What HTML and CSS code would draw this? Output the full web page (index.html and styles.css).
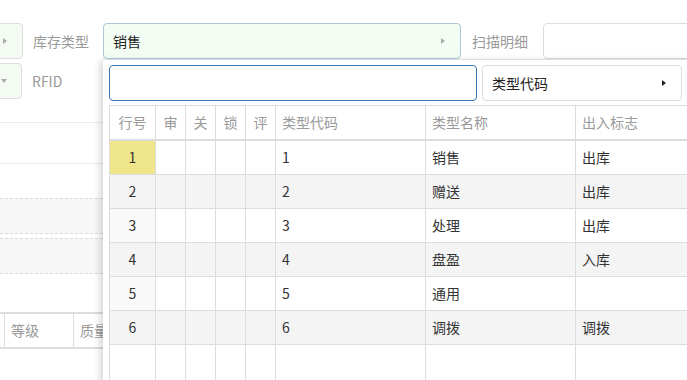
FILE: index.html
```html
<!DOCTYPE html>
<html lang="zh-CN">
<head>
<meta charset="utf-8">
<title>库存类型</title>
<link rel="stylesheet" href="styles.css">
</head>
<body>
<div class="page">
  <div class="form-row">
    <div class="side-box"><span class="tri-right gray"></span></div>
    <div class="lbl lbl-first">库存类型</div>
    <div class="select"><span class="select-text">销售</span><span class="tri-right gray"></span></div>
    <div class="lbl lbl-second">扫描明细</div>
    <div class="text-box"></div>
  </div>
  <div class="form-row row-two">
    <div class="side-box side-box-2"><span class="tri-down"></span></div>
    <div class="lbl lbl-first">RFID</div>
  </div>
  <div class="blank blank-1"></div>
  <div class="blank blank-2"></div>
  <div class="dash-box dash-1"></div>
  <div class="dash-box dash-2"></div>
  <div class="bottom-head">
    <div class="bh-cell bh-a"></div>
    <div class="bh-cell bh-b">等级</div>
    <div class="bh-cell bh-c">质量</div>
  </div>

  <div class="popup">
    <div class="popup-bar">
      <div class="search"></div>
      <div class="field-btn"><span>类型代码</span><span class="tri-right dark"></span></div>
    </div>
    <div class="grid">
      <div class="h c">行号</div>
      <div class="h c">审</div>
      <div class="h c">关</div>
      <div class="h c">锁</div>
      <div class="h c">评</div>
      <div class="h">类型代码</div>
      <div class="h">类型名称</div>
      <div class="h">出入标志</div>

      <div class="d c ln sel">1</div><div class="d"></div><div class="d"></div><div class="d"></div><div class="d"></div><div class="d">1</div><div class="d">销售</div><div class="d">出库</div>
      <div class="d c ln alt">2</div><div class="d alt"></div><div class="d alt"></div><div class="d alt"></div><div class="d alt"></div><div class="d alt">2</div><div class="d alt">赠送</div><div class="d alt">出库</div>
      <div class="d c ln odd">3</div><div class="d"></div><div class="d"></div><div class="d"></div><div class="d"></div><div class="d">3</div><div class="d">处理</div><div class="d">出库</div>
      <div class="d c ln alt">4</div><div class="d alt"></div><div class="d alt"></div><div class="d alt"></div><div class="d alt"></div><div class="d alt">4</div><div class="d alt">盘盈</div><div class="d alt">入库</div>
      <div class="d c ln odd">5</div><div class="d"></div><div class="d"></div><div class="d"></div><div class="d"></div><div class="d">5</div><div class="d">通用</div><div class="d"></div>
      <div class="d c ln alt">6</div><div class="d alt"></div><div class="d alt"></div><div class="d alt"></div><div class="d alt"></div><div class="d alt">6</div><div class="d alt">调拨</div><div class="d alt">调拨</div>
      <div class="d last"></div><div class="d last"></div><div class="d last"></div><div class="d last"></div><div class="d last"></div><div class="d last"></div><div class="d last"></div><div class="d last"></div>
    </div>
  </div>
</div>
</body>
</html>
```

FILE: styles.css
```css
html, body {
  margin: 0;
  padding: 0;
  background: #fff;
  overflow: hidden;
}
body {
  width: 687px;
  height: 380px;
  font-family: "Noto Sans CJK SC", "Noto Sans", sans-serif;
  font-size: 14px;
  color: #333;
}
.page {
  position: relative;
  width: 687px;
  height: 380px;
  padding-top: 23px;
  box-sizing: border-box;
  overflow: hidden;
}
.form-row {
  display: flex;
  align-items: center;
  height: 36px;
}
.form-row > * {
  flex-shrink: 0;
}
.row-two {
  margin-top: 4px;
}
.side-box {
  box-sizing: border-box;
  width: 61px;
  height: 36px;
  margin-left: -38px;
  border: 1px solid #ddd;
  border-radius: 4px;
  background: #f3fbf3;
  display: flex;
  align-items: center;
  justify-content: flex-end;
  padding-right: 15px;
}
.side-box-2 {
  width: 60px;
  padding-right: 14px;
}
.lbl {
  box-sizing: border-box;
  color: #999;
  line-height: 20px;
  white-space: nowrap;
}
.lbl-first {
  width: 80px;
  padding-left: 10px;
}
.lbl-second {
  width: 82px;
  padding-left: 11px;
}
.select {
  box-sizing: border-box;
  width: 358px;
  height: 36px;
  border: 1px solid #a9c8da;
  border-radius: 4px;
  background: #f3fdf3;
  display: flex;
  align-items: center;
  justify-content: space-between;
  padding: 0 15px 0 9px;
}
.select-text {
  color: #222;
  line-height: 20px;
}
.text-box {
  box-sizing: border-box;
  width: 200px;
  height: 36px;
  border: 1px solid #ddd;
  border-radius: 4px;
  background: #fff;
}
.tri-right {
  width: 0;
  height: 0;
  border-top: 3.5px solid transparent;
  border-bottom: 3.5px solid transparent;
  border-left: 4px solid #aaa;
}
.tri-right.dark {
  border-left-color: #222;
}
.tri-down {
  width: 0;
  height: 0;
  border-left: 3.5px solid transparent;
  border-right: 3.5px solid transparent;
  border-top: 4px solid #aaa;
}
.blank {
  border-bottom: 1px solid #ececec;
}
.blank-1 {
  height: 23px;
}
.blank-2 {
  height: 40px;
}
.dash-box {
  box-sizing: border-box;
  height: 36px;
  background: #f7f7f7;
  border-top: 1px dashed #dcdcdc;
  border-bottom: 1px dashed #dcdcdc;
}
.dash-1 {
  margin-top: 34px;
}
.dash-2 {
  margin-top: 4px;
}
.bottom-head {
  margin-top: 38px;
  display: flex;
  height: 37px;
  box-sizing: border-box;
  border-top: 2px solid #ddd;
  border-bottom: 2px solid #ddd;
}
.bh-cell {
  box-sizing: border-box;
  flex-shrink: 0;
  height: 33px;
  line-height: 33px;
  color: #999;
  border-right: 1px solid #ddd;
  white-space: nowrap;
}
.bh-a {
  width: 5px;
}
.bh-b {
  width: 69px;
  padding-left: 6px;
}
.bh-c {
  width: 120px;
  padding-left: 6px;
}

/* dropdown popup overlaying the form */
.popup {
  position: absolute;
  left: 103px;
  top: 59px;
  width: 620px;
  height: 340px;
  box-sizing: border-box;
  background: #fff;
  border-top: 1px solid #dedede;
  box-shadow: -3px 2px 7px rgba(0, 0, 0, 0.16);
  padding: 5px 0 0 6px;
}
.popup-bar {
  display: flex;
  gap: 5px;
}
.popup-bar > * {
  flex-shrink: 0;
}
.search {
  box-sizing: border-box;
  width: 368px;
  height: 36px;
  border: 1px solid #3a77b6;
  border-radius: 4px;
  background: #fff;
}
.field-btn {
  box-sizing: border-box;
  width: 200px;
  height: 36px;
  border: 1px solid #ddd;
  border-radius: 4px;
  background: #fff;
  display: flex;
  align-items: center;
  justify-content: space-between;
  padding: 0 15px 0 9px;
  color: #222;
  line-height: 20px;
}
.grid {
  margin-top: 4px;
  display: grid;
  grid-template-columns: 46px 30px 30px 30px 30px 150px 150px 150px;
  grid-auto-rows: auto;
  border-top: 1px solid #ddd;
  border-left: 1px solid #ddd;
  width: max-content;
}
.h, .d {
  box-sizing: border-box;
  border-right: 1px solid #ddd;
  border-bottom: 1px solid #ddd;
  padding-left: 6px;
  white-space: nowrap;
  overflow: hidden;
}
.h {
  height: 35px;
  line-height: 33px;
  border-bottom-width: 2px;
  color: #999;
}
.d {
  height: 34px;
  line-height: 33px;
  color: #333;
  background: #fff;
}
.d.last {
  height: 60px;
}
.c {
  text-align: center;
  padding-left: 0;
}
.alt {
  background: #f4f4f4;
}
.ln.odd {
  background: #f9f9f9;
}
.ln.sel {
  background: #efe58b;
}
```
